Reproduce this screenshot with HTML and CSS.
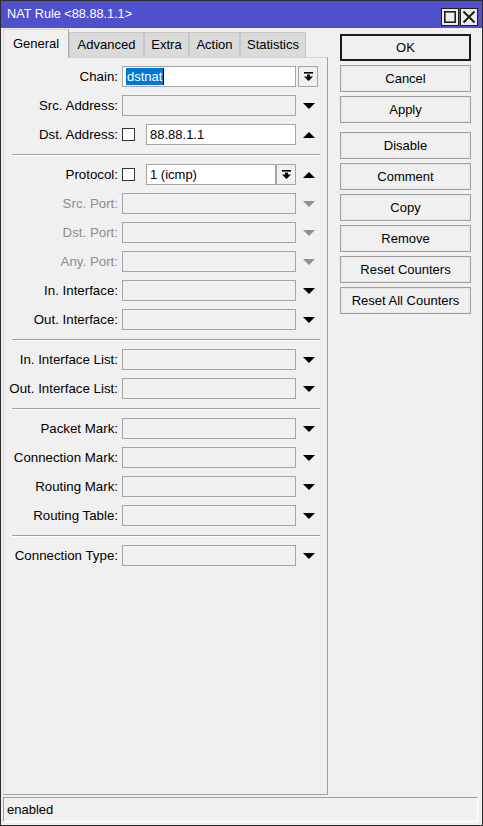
FILE: index.html
```html
<!DOCTYPE html>
<html lang="en">
<head>
<meta charset="utf-8">
<title>NAT Rule &lt;88.88.1.1&gt;</title>
<link rel="stylesheet" href="styles.css">
</head>
<body>
<div class="window">
  <div class="titlebar">
    <span class="title">NAT Rule &lt;88.88.1.1&gt;</span>
    <div class="tb-btns">
      <span class="tb-btn"><svg width="14" height="14" viewBox="0 0 14 14"><rect x="1.8" y="1.8" width="10.4" height="10.4" fill="none" stroke="#1f1f1f" stroke-width="1.6"/></svg></span>
      <span class="tb-btn"><svg width="14" height="14" viewBox="0 0 14 14"><path d="M1.5 1.5L12.5 12.5M12.5 1.5L1.5 12.5" stroke="#1f1f1f" stroke-width="2"/></svg></span>
    </div>
  </div>

  <div class="main">
    <div class="left">
      <div class="tabs">
        <span class="tab active t-general">General</span>
        <span class="tab t-advanced">Advanced</span>
        <span class="tab t-extra">Extra</span>
        <span class="tab t-action">Action</span>
        <span class="tab t-stats">Statistics</span>
      </div>

      <div class="panel">
        <div class="row">
          <span class="lbl">Chain:</span>
          <div class="field"><div class="input on"><span class="sel">dstnat</span><span class="caret"></span></div></div>
          <span class="drop outer"><svg width="9" height="9" viewBox="0 0 9 9"><rect x="0" y="0" width="9" height="1.6"/><rect x="3" y="2.6" width="3" height="2.2"/><polygon points="0,4.6 9,4.6 4.5,9"/></svg></span>
        </div>
        <div class="row">
          <span class="lbl">Src. Address:</span>
          <div class="field"><div class="input"></div></div>
          <svg class="arrow" viewBox="0 0 12 6"><polygon points="0,0 12,0 6,6"/></svg>
        </div>
        <div class="row">
          <span class="lbl">Dst. Address:</span>
          <div class="field"><span class="check"></span><div class="input on">88.88.1.1</div></div>
          <svg class="arrow" viewBox="0 0 12 6"><polygon points="0,6 12,6 6,0"/></svg>
        </div>

        <div class="sep"></div>

        <div class="row">
          <span class="lbl">Protocol:</span>
          <div class="field"><span class="check"></span><div class="input on">1 (icmp)</div><span class="drop"><svg width="9" height="9" viewBox="0 0 9 9"><rect x="0" y="0" width="9" height="1.6"/><rect x="3" y="2.6" width="3" height="2.2"/><polygon points="0,4.6 9,4.6 4.5,9"/></svg></span></div>
          <svg class="arrow" viewBox="0 0 12 6"><polygon points="0,6 12,6 6,0"/></svg>
        </div>
        <div class="row">
          <span class="lbl off">Src. Port:</span>
          <div class="field"><div class="input"></div></div>
          <svg class="arrow off" viewBox="0 0 12 6"><polygon points="0,0 12,0 6,6"/></svg>
        </div>
        <div class="row">
          <span class="lbl off">Dst. Port:</span>
          <div class="field"><div class="input"></div></div>
          <svg class="arrow off" viewBox="0 0 12 6"><polygon points="0,0 12,0 6,6"/></svg>
        </div>
        <div class="row">
          <span class="lbl off">Any. Port:</span>
          <div class="field"><div class="input"></div></div>
          <svg class="arrow off" viewBox="0 0 12 6"><polygon points="0,0 12,0 6,6"/></svg>
        </div>
        <div class="row">
          <span class="lbl">In. Interface:</span>
          <div class="field"><div class="input"></div></div>
          <svg class="arrow" viewBox="0 0 12 6"><polygon points="0,0 12,0 6,6"/></svg>
        </div>
        <div class="row">
          <span class="lbl">Out. Interface:</span>
          <div class="field"><div class="input"></div></div>
          <svg class="arrow" viewBox="0 0 12 6"><polygon points="0,0 12,0 6,6"/></svg>
        </div>

        <div class="sep"></div>

        <div class="row">
          <span class="lbl">In. Interface List:</span>
          <div class="field"><div class="input"></div></div>
          <svg class="arrow" viewBox="0 0 12 6"><polygon points="0,0 12,0 6,6"/></svg>
        </div>
        <div class="row">
          <span class="lbl">Out. Interface List:</span>
          <div class="field"><div class="input"></div></div>
          <svg class="arrow" viewBox="0 0 12 6"><polygon points="0,0 12,0 6,6"/></svg>
        </div>

        <div class="sep"></div>

        <div class="row">
          <span class="lbl">Packet Mark:</span>
          <div class="field"><div class="input"></div></div>
          <svg class="arrow" viewBox="0 0 12 6"><polygon points="0,0 12,0 6,6"/></svg>
        </div>
        <div class="row">
          <span class="lbl">Connection Mark:</span>
          <div class="field"><div class="input"></div></div>
          <svg class="arrow" viewBox="0 0 12 6"><polygon points="0,0 12,0 6,6"/></svg>
        </div>
        <div class="row">
          <span class="lbl">Routing Mark:</span>
          <div class="field"><div class="input"></div></div>
          <svg class="arrow" viewBox="0 0 12 6"><polygon points="0,0 12,0 6,6"/></svg>
        </div>
        <div class="row">
          <span class="lbl">Routing Table:</span>
          <div class="field"><div class="input"></div></div>
          <svg class="arrow" viewBox="0 0 12 6"><polygon points="0,0 12,0 6,6"/></svg>
        </div>

        <div class="sep"></div>

        <div class="row">
          <span class="lbl">Connection Type:</span>
          <div class="field"><div class="input"></div></div>
          <svg class="arrow" viewBox="0 0 12 6"><polygon points="0,0 12,0 6,6"/></svg>
        </div>
      </div>
    </div>

    <div class="actions">
      <span class="btn default">OK</span>
      <span class="btn">Cancel</span>
      <span class="btn">Apply</span>
      <span class="btn spaced">Disable</span>
      <span class="btn">Comment</span>
      <span class="btn">Copy</span>
      <span class="btn">Remove</span>
      <span class="btn">Reset Counters</span>
      <span class="btn">Reset All Counters</span>
    </div>
  </div>

  <div class="status">enabled</div>
</div>
</body>
</html>
```

FILE: styles.css
```css
html, body {
  margin: 0;
  padding: 0;
  background: #f0f0f0;
}

body {
  font: 13px "Liberation Sans", Arial, sans-serif;
  color: #000;
}

.window {
  width: 483px;
  height: 826px;
  box-sizing: border-box;
  border: 1px solid #2b2b2b;
  background: #f0f0f0;
  display: flex;
  flex-direction: column;
}

/* title bar */
.titlebar {
  flex: none;
  height: 27px;
  background: #5050cd;
  color: #fff;
  display: flex;
  align-items: flex-start;
}

.title {
  padding-left: 6px;
  line-height: 27px;
  font-size: 12.7px;
}

.tb-btns {
  margin-left: auto;
  margin-top: 7px;
  margin-right: 4px;
  display: flex;
  gap: 1px;
}

.tb-btn {
  width: 18px;
  height: 18px;
  box-sizing: border-box;
  border: 1px solid #1f1f1f;
  background: #ececec;
  display: flex;
  align-items: center;
  justify-content: center;
}

/* body: tabbed panel + action buttons */
.main {
  flex: 1;
  min-height: 0;
  display: flex;
  padding-left: 2px;
}

.left {
  width: 325px;
  flex: none;
  display: flex;
  flex-direction: column;
  padding-top: 1px;
}

.tabs {
  height: 28px;
  flex: none;
  display: flex;
  align-items: flex-end;
}

.tab {
  height: 25px;
  box-sizing: border-box;
  border: 1px solid #c8c8c8;
  border-bottom: none;
  background: #dadada;
  text-align: center;
  line-height: 24px;
}

.tab.active {
  height: 29px;
  margin-bottom: -1px;
  background: #f0f0f0;
  line-height: 27px;
  border-color: #d4d4d4 #ababab #d4d4d4 #d4d4d4;
  position: relative;
  z-index: 1;
}

.t-general { width: 66px; }
.t-advanced { width: 75px; }
.t-extra { width: 45px; }
.t-action { width: 51px; }
.t-stats { width: 66px; }

.panel {
  flex: 1;
  border: 1px solid;
  border-color: #d4d4d4 #a0a0a0 #a0a0a0 #d4d4d4;
  padding-top: 8px;
}

/* form rows */
.row {
  display: flex;
  align-items: center;
  height: 21px;
  margin-bottom: 8px;
}

.lbl {
  width: 114px;
  flex: none;
  text-align: right;
  white-space: nowrap;
  font-size: 13.3px;
}

.lbl.off {
  color: #8d8d8d;
}

.field {
  width: 174px;
  height: 21px;
  flex: none;
  margin-left: 4px;
  display: flex;
  align-items: center;
}

.input {
  flex: 1;
  height: 21px;
  box-sizing: border-box;
  border: 1px solid #a5a5a5;
  background: #f0f0f0;
  padding-left: 3px;
  display: flex;
  align-items: center;
  white-space: nowrap;
  overflow: hidden;
}

.input.on {
  background: #fff;
}

.sel {
  background: #0078d7;
  color: #fff;
  padding: 0 1px;
  line-height: 17px;
}

.caret {
  width: 1px;
  height: 17px;
  background: #000;
}

.check {
  width: 13px;
  height: 13px;
  flex: none;
  box-sizing: border-box;
  border: 1px solid #333;
  background: #fff;
  margin-right: 11px;
}

.drop {
  width: 20px;
  height: 21px;
  flex: none;
  box-sizing: border-box;
  border: 1px solid #a5a5a5;
  background: #f0f0f0;
  display: flex;
  align-items: center;
  justify-content: center;
}

.drop.outer {
  margin-left: 2px;
}

.drop svg {
  fill: #000;
}

.arrow {
  width: 12px;
  height: 6px;
  flex: none;
  margin-left: 7px;
  fill: #000;
}

.arrow.off {
  fill: #8e918e;
}

/* group divider: grooved line; top margin collapses with the row gap above */
.sep {
  height: 0;
  border-top: 1px solid #a0a0a0;
  border-bottom: 1px solid #fff;
  margin: 9px 7px 8px 8px;
}

/* action buttons */
.actions {
  width: 131px;
  flex: none;
  margin-left: 12px;
  padding-top: 6px;
  display: flex;
  flex-direction: column;
  gap: 4px;
}

.btn {
  height: 27px;
  box-sizing: border-box;
  border: 1px solid #a0a0a0;
  box-shadow: inset 0 0 0 1px #e6e6e6;
  background: #f0f0f0;
  text-align: center;
  line-height: 25px;
  white-space: nowrap;
}

.btn.default {
  border: 2px solid #1c1c1c;
  box-shadow: none;
  line-height: 23px;
}

.btn.spaced {
  margin-top: 5px;
}

/* status bar */
.status {
  flex: none;
  height: 25px;
  box-sizing: border-box;
  margin: 2px 4px 3px 2px;
  border: 1px solid;
  border-color: #a0a0a0 #fff #fff #a0a0a0;
  padding-left: 3px;
  line-height: 23px;
}
```
